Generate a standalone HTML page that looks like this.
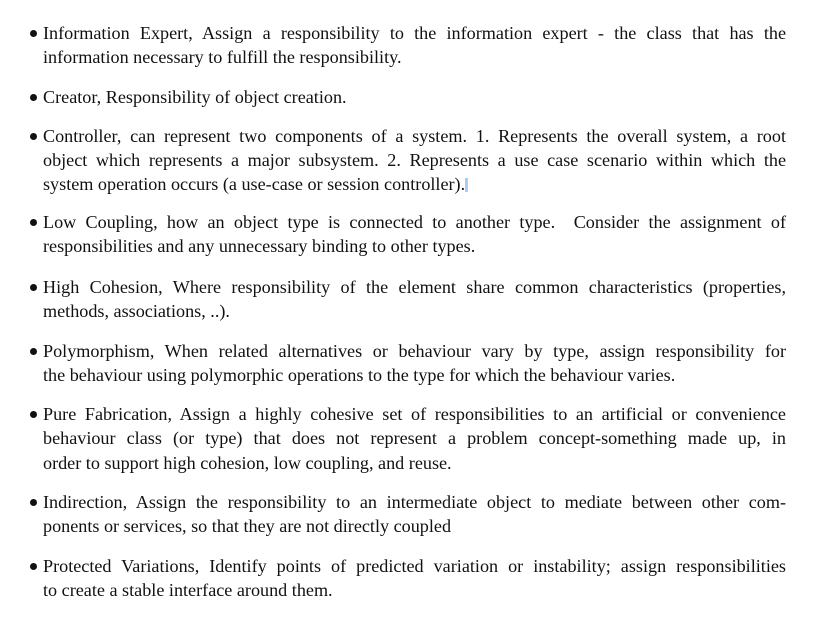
<!DOCTYPE html>
<html><head><meta charset="utf-8"><style>
html,body{margin:0;padding:0;background:#fff;width:839px;height:622px;overflow:hidden}
body{position:relative;color:#111}
.l{position:absolute;left:43px;width:743px;height:24px;line-height:24px;white-space:nowrap;font-family:"Liberation Serif","Noto Serif CJK SC",serif;font-size:18.15px}
.j{text-align:justify;text-align-last:justify;white-space:normal}
.b{position:absolute;left:30px;width:7px;height:7px;border-radius:50%;background:#111}
.cur{display:inline-block;width:3px;height:14px;background:#a9cdf2;vertical-align:-2px}
</style></head><body>
<div class="b" style="top:30px"></div>
<div class="l j" style="top:21px">Information Expert, Assign a responsibility to the information expert - the class that has the</div>
<div class="l" style="top:45px">information necessary to fulfill the responsibility.</div>

<div class="b" style="top:94px"></div>
<div class="l" style="top:85px">Creator, Responsibility of object creation.</div>

<div class="b" style="top:133px"></div>
<div class="l j" style="top:124px">Controller, can represent two components of a system. 1. Represents the overall system, a root</div>
<div class="l j" style="top:148px">object which represents a major subsystem. 2. Represents a use case scenario within which the</div>
<div class="l" style="top:172px">system operation occurs (a use-case or session controller).<span class="cur"></span></div>

<div class="b" style="top:219px"></div>
<div class="l j" style="top:210px">Low Coupling, how an object type is connected to another type. &nbsp;Consider the assignment of</div>
<div class="l" style="top:234px">responsibilities and any unnecessary binding to other types.</div>

<div class="b" style="top:284px"></div>
<div class="l j" style="top:275px">High Cohesion, Where responsibility of the element share common characteristics (properties,</div>
<div class="l" style="top:299px">methods, associations, ..).</div>

<div class="b" style="top:348px"></div>
<div class="l j" style="top:339px">Polymorphism, When related alternatives or behaviour vary by type, assign responsibility for</div>
<div class="l" style="top:363px">the behaviour using polymorphic operations to the type for which the behaviour varies.</div>

<div class="b" style="top:411px"></div>
<div class="l j" style="top:402px">Pure Fabrication, Assign a highly cohesive set of responsibilities to an artificial or convenience</div>
<div class="l j" style="top:426px">behaviour class (or type) that does not represent a problem concept-something made up, in</div>
<div class="l" style="top:451px">order to support high cohesion, low coupling, and reuse.</div>

<div class="b" style="top:499px"></div>
<div class="l j" style="top:490px">Indirection, Assign the responsibility to an intermediate object to mediate between other com-</div>
<div class="l" style="top:514px">ponents or services, so that they are not directly coupled</div>

<div class="b" style="top:563px"></div>
<div class="l j" style="top:554px">Protected Variations, Identify points of predicted variation or instability; assign responsibilities</div>
<div class="l" style="top:578px">to create a stable interface around them.</div>
</body></html>
